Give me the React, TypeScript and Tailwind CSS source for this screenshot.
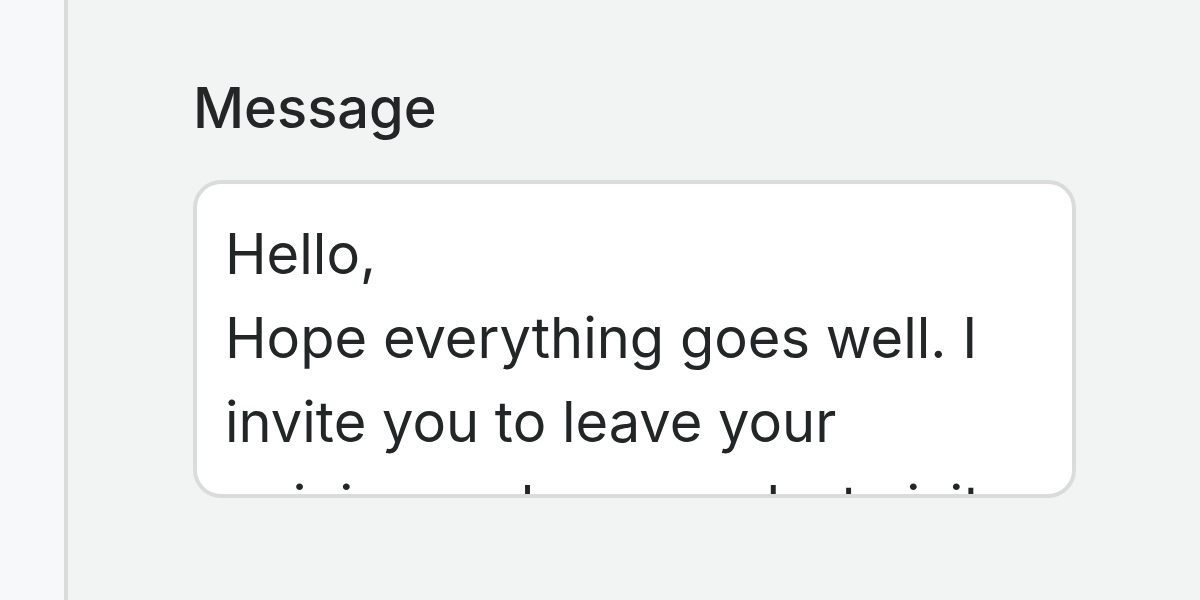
import { useState } from 'react';

const MESSAGE =
  'Hello,\nHope everything goes well. I invite you to leave your opinion and on your last visit to our store.';

const App = () => {
  const [message, setMessage] = useState(MESSAGE);

  return (
    <div className="flex h-[600px] w-[1200px] overflow-hidden bg-[#f2f3f3] font-['Inter',sans-serif] text-[#232627]">
      <aside className="w-[64px] shrink-0 border-r-4 border-[#dadcdc] bg-[#f7f8f9] box-content" />
      <main className="flex flex-1 flex-col pl-[125px] pr-[124px] pt-[80px]">
        <label htmlFor="message" className="text-[56px] font-medium leading-none">
          Message
        </label>
        <textarea
          id="message"
          value={message}
          onChange={(e) => setMessage(e.target.value)}
          className="mt-[44px] h-[318px] w-full resize-none overflow-hidden rounded-[28px] border-4 border-[#dadcdc] bg-white px-[28px] pt-[28px] pb-[30px] text-[56px] leading-[84px] text-[#232627] outline-none"
        />
      </main>
    </div>
  );
};

export default App;
